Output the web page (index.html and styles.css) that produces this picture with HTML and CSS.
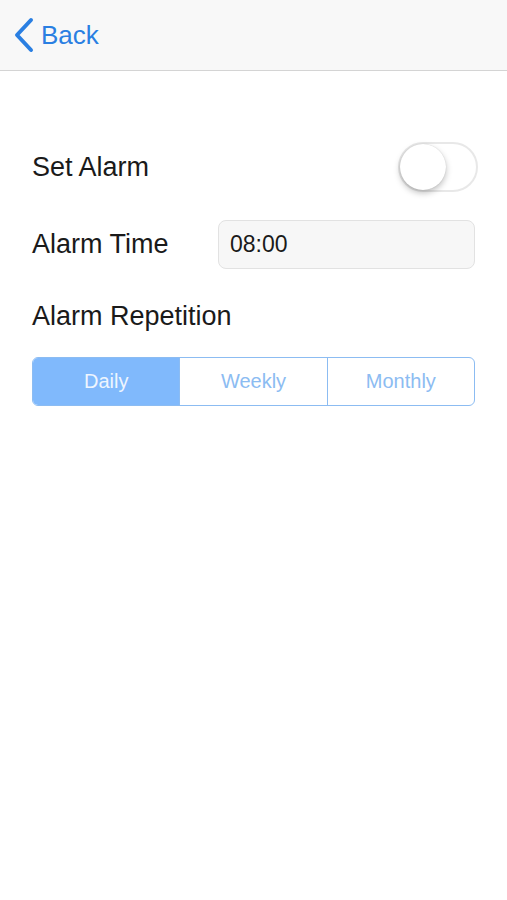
FILE: index.html
```html
<!DOCTYPE html>
<html>
<head>
<title>Alarm</title>
<link rel="stylesheet" href="styles.css">
</head>
<body>

<div class="nav">
  <a class="back" href="#">
    <svg width="22" height="36" viewBox="0 0 22 36"><path d="M18 3 L4 18 L18 33" fill="none" stroke="#2a7fe2" stroke-width="4" stroke-linecap="round" stroke-linejoin="round"/></svg>
    <span>Back</span>
  </a>
</div>

<div class="content">
  <div class="row first">
    <span class="label">Set Alarm</span>
    <div class="switch"><div class="knob"></div></div>
  </div>

  <div class="row time">
    <span class="label">Alarm Time</span>
    <div class="field">08:00</div>
  </div>

  <div class="label rep">Alarm Repetition</div>

  <div class="segments">
    <div class="seg on">Daily</div>
    <div class="seg">Weekly</div>
    <div class="seg">Monthly</div>
  </div>
</div>

</body>
</html>
```

FILE: styles.css
```css
body { margin: 0; background: #fff; font-family: "Liberation Sans", Arial, sans-serif; color: #1a1a1a; }
.nav { height: 70px; background: #f8f8f8; border-bottom: 1px solid #d4d4d4; display: flex; align-items: center; padding-left: 13px; }
.back { display: flex; align-items: center; gap: 6px; color: #2a7fe2; text-decoration: none; font-size: 26px; }
.back span { margin-top: 1px; }
.content { padding: 0 32px; }
.row { display: flex; align-items: center; justify-content: space-between; }
.row.first { margin-top: 71px; height: 50px; }
.row.time { margin-top: 28px; height: 49px; }
.label { font-size: 27px; }
.switch { width: 72px; height: 46px; border: 2px solid #e8e8e8; border-radius: 26px; margin-right: -3px; display: flex; align-items: center; padding: 0 2px; }
.knob { width: 46px; height: 46px; border-radius: 50%; background: #fff; box-shadow: 0 3px 6px rgba(0,0,0,0.25), 0 0 1px rgba(0,0,0,0.2); margin-left: -2px; }
.field { width: 257px; height: 49px; box-sizing: border-box; border: 1px solid #e2e2e2; border-radius: 8px; background: #f7f7f7; font-size: 23px; padding-left: 11px; display: flex; align-items: center; }
.rep { margin-top: 32px; height: 30px; line-height: 30px; }
.segments { margin-top: 26px; display: flex; height: 47px; border: 1.5px solid #8cbcf2; border-radius: 6px; overflow: hidden; }
.seg { flex: 1; display: flex; align-items: center; justify-content: center; font-size: 20px; color: #8cbcf2; border-left: 1.5px solid #8cbcf2; }
.seg:first-child { border-left: none; }
.seg.on { background: #80b9fc; color: #eef5fe; }
```
